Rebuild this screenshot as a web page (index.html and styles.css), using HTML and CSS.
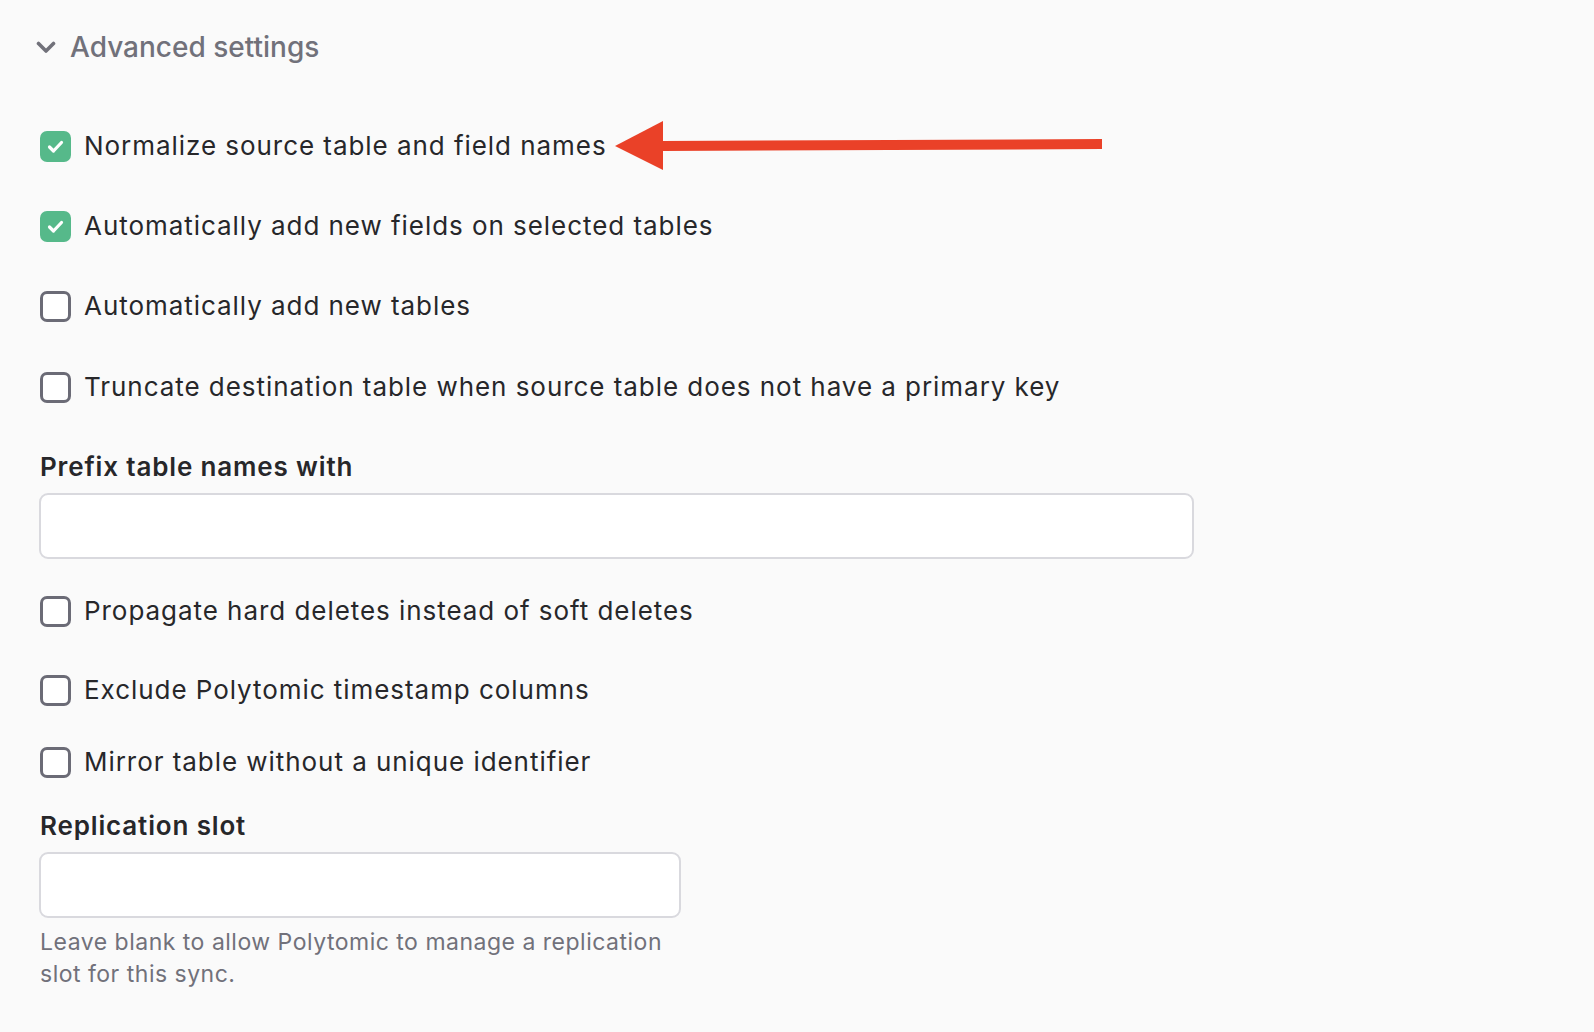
FILE: index.html
```html
<!DOCTYPE html>
<html lang="en">
<head>
<meta charset="utf-8">
<title>Advanced settings</title>
<link rel="stylesheet" href="styles.css">
</head>
<body>
<div class="page">
  <div class="section-header">
    <svg class="chevron" width="20" height="14" viewBox="0 0 20 14"><path d="M2.5 2.5 L10 10 L17.5 2.5" fill="none" stroke="#71717a" stroke-width="3.6" stroke-linecap="round" stroke-linejoin="round"/></svg>
    <span class="section-title">Advanced settings</span>
  </div>

  <div class="options">
    <label class="check-row row-first">
      <span class="box checked"><svg width="31" height="31" viewBox="0 0 31 31"><path d="M9.5 16 L13.5 20 L21.5 11.5" fill="none" stroke="#fff" stroke-width="3.2" stroke-linecap="round" stroke-linejoin="round"/></svg></span>
      <span class="check-text">Normalize source table and field names</span>
    </label>
    <label class="check-row gap-48">
      <span class="box checked"><svg width="31" height="31" viewBox="0 0 31 31"><path d="M9.5 16 L13.5 20 L21.5 11.5" fill="none" stroke="#fff" stroke-width="3.2" stroke-linecap="round" stroke-linejoin="round"/></svg></span>
      <span class="check-text">Automatically add new fields on selected tables</span>
    </label>
    <label class="check-row gap-48">
      <span class="box"></span>
      <span class="check-text">Automatically add new tables</span>
    </label>
    <label class="check-row gap-49">
      <span class="box"></span>
      <span class="check-text">Truncate destination table when source table does not have a primary key</span>
    </label>

    <div class="field gap-48">
      <div class="field-label">Prefix table names with</div>
      <div class="input input-wide"></div>
    </div>

    <label class="check-row gap-36">
      <span class="box"></span>
      <span class="check-text">Propagate hard deletes instead of soft deletes</span>
    </label>
    <label class="check-row gap-47">
      <span class="box"></span>
      <span class="check-text">Exclude Polytomic timestamp columns</span>
    </label>
    <label class="check-row gap-40">
      <span class="box"></span>
      <span class="check-text">Mirror table without a unique identifier</span>
    </label>

    <div class="field gap-32">
      <div class="field-label">Replication slot</div>
      <div class="input input-narrow"></div>
      <p class="help">Leave blank to allow Polytomic to manage a replication slot for this sync.</p>
    </div>
  </div>

  <svg class="annotation" width="500" height="60" viewBox="0 0 500 60">
    <polygon points="5,31 53,6 53,55" fill="#ea4128"/>
    <polygon points="52,26 492,24 492,34 52,36" fill="#ea4128"/>
  </svg>
</div>
</body>
</html>
```

FILE: styles.css
```css
html, body {
  margin: 0;
  padding: 0;
  background: #fafafa;
}

body {
  font-family: Inter, "Noto Sans", "Liberation Sans", sans-serif;
  color: #27272a;
}

.page {
  position: relative;
  padding: 31px 0 40px 39px;
}

.section-header {
  display: flex;
  align-items: center;
  height: 32px;
  margin-left: -3px;
}

.chevron {
  display: block;
  margin-top: 2px;
}

.section-title {
  margin-left: 14px;
  font-size: 28px;
  line-height: 32px;
  font-weight: 500;
  color: #71717a;
}

.options {
  display: flex;
  flex-direction: column;
  align-items: flex-start;
}

.check-row {
  display: flex;
  align-items: center;
  height: 32px;
  margin-left: 1px;
}

.row-first { margin-top: 67px; }
.gap-49 { margin-top: 49px; }
.gap-48 { margin-top: 48px; }
.gap-47 { margin-top: 47px; }
.gap-40 { margin-top: 40px; }
.gap-36 { margin-top: 36px; }
.gap-32 { margin-top: 32px; }

.box {
  box-sizing: border-box;
  width: 31px;
  height: 31px;
  border: 3px solid #6b6b76;
  border-radius: 7px;
  background: #fff;
  flex: none;
  display: flex;
  align-items: center;
  justify-content: center;
}

.box.checked {
  border: none;
  background: #56b98a;
}

.box svg { display: block; }

.check-text {
  margin-left: 13px;
  font-size: 26px;
  line-height: 32px;
  font-weight: 400;
  letter-spacing: 0.95px;
  color: #27272a;
}

.field {
  display: flex;
  flex-direction: column;
}

.field-label {
  font-size: 26px;
  line-height: 32px;
  font-weight: 600;
  letter-spacing: 0.85px;
  color: #27272a;
  margin-left: 1px;
}

.input {
  box-sizing: border-box;
  margin-top: 10px;
  height: 66px;
  background: #fff;
  border: 2px solid #d9d9de;
  border-radius: 9px;
}

.input-wide { width: 1155px; }
.input-narrow { width: 642px; }

.help {
  margin: 8px 0 0 1px;
  width: 640px;
  font-size: 23px;
  line-height: 32px;
  letter-spacing: 0.5px;
  color: #71717a;
}

.annotation {
  position: absolute;
  left: 610px;
  top: 115px;
  display: block;
}
```
